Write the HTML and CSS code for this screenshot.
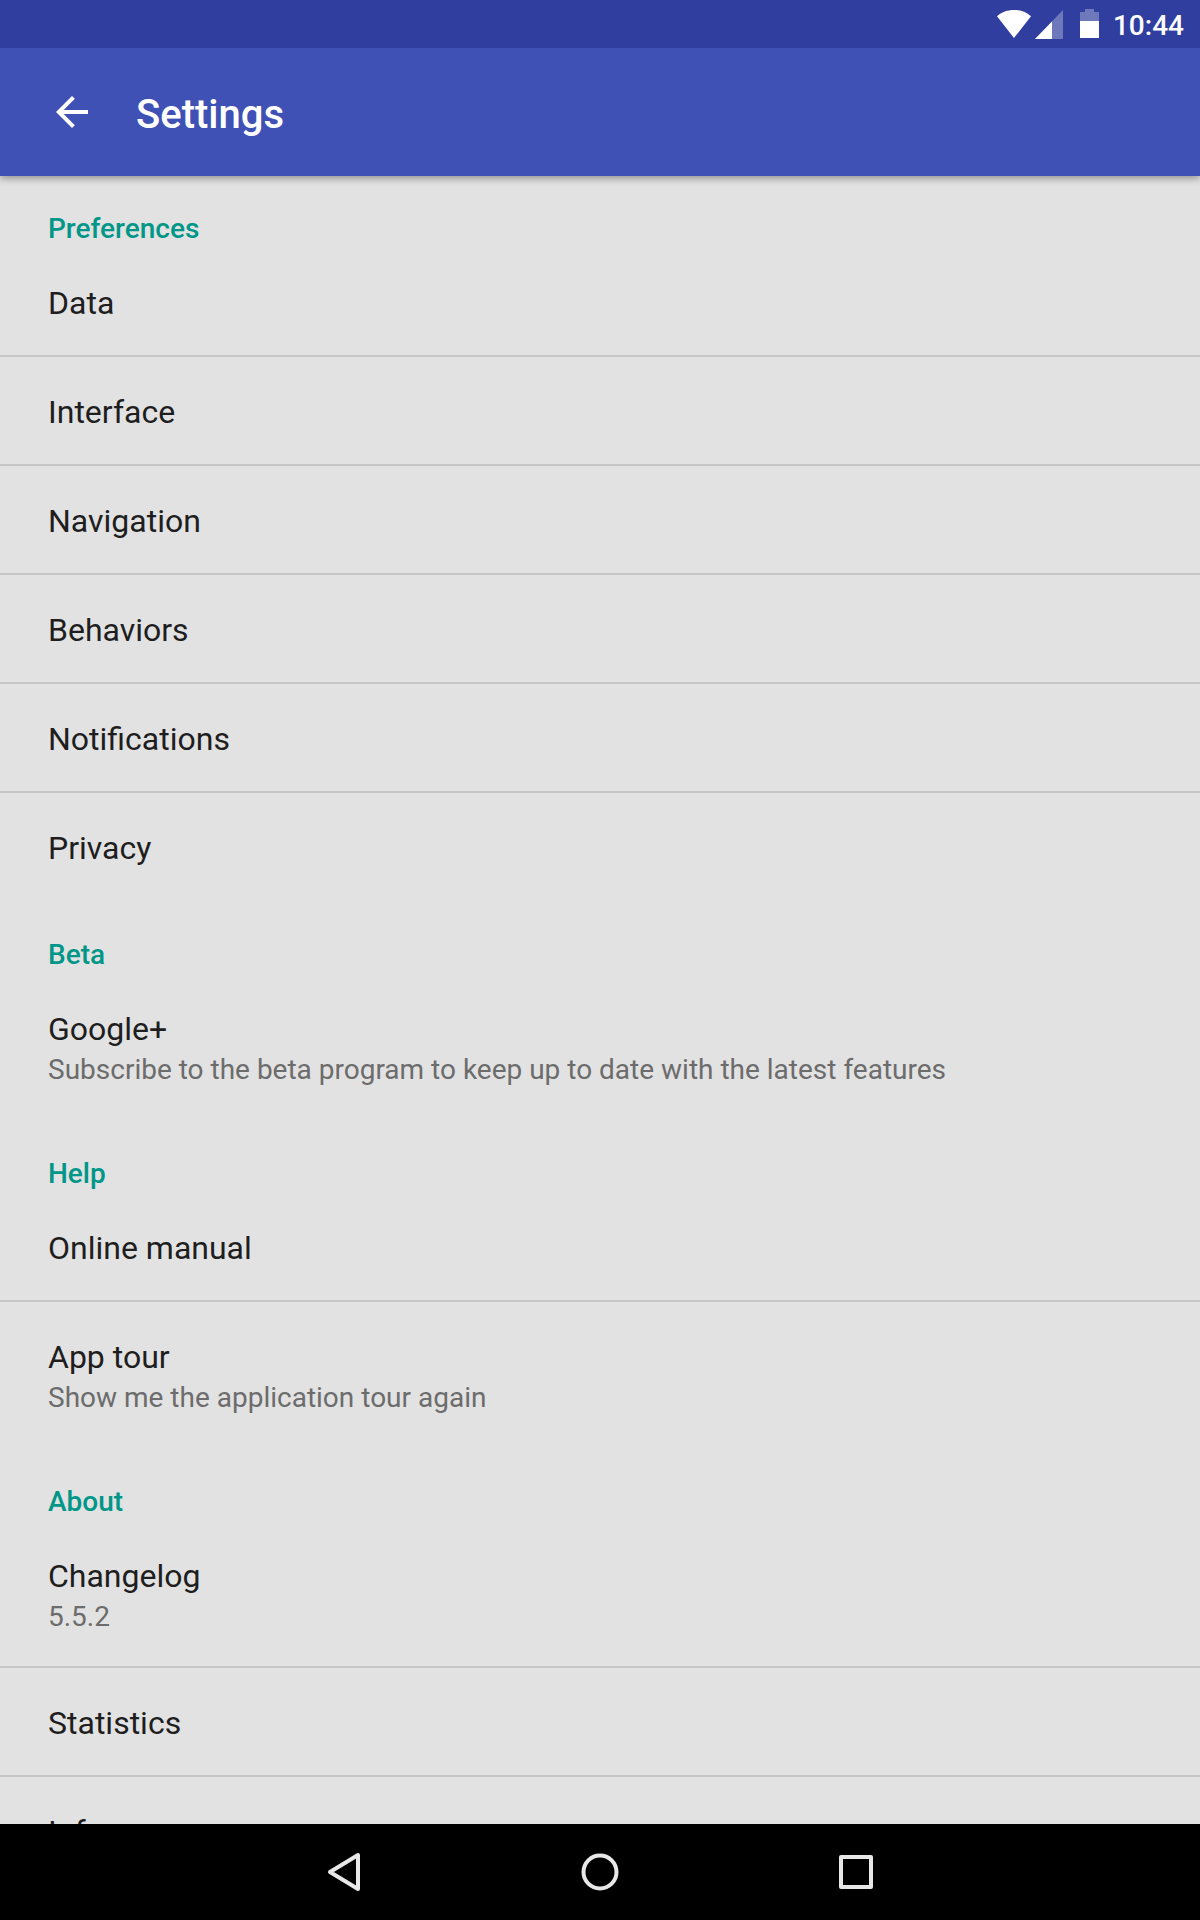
FILE: index.html
```html
<!DOCTYPE html>
<html lang="en">
<head>
<meta charset="utf-8">
<meta name="viewport" content="width=device-width, initial-scale=1">
<title>Settings</title>
<link rel="stylesheet" href="styles.css">
</head>
<body>
<div class="statusbar">
  <svg class="wifi" width="36" height="30" viewBox="0 0 36 30" aria-hidden="true"><path d="M1 7.2C5.500 3 11.500 1 18 1s12.500 2 17 6.200L18 29z" fill="#fff"/></svg>
  <svg class="signal" width="28" height="30" viewBox="0 0 28 30" aria-hidden="true"><path d="M28 1v29H0z" fill="#fff" fill-opacity=".3"/><path d="M17 12.400V30H0z" fill="#fff"/></svg>
  <svg class="battery" width="19" height="30" viewBox="0 0 19 30" aria-hidden="true"><path d="M5 0h9v3h5v9H0V3h5z" fill="#fff" fill-opacity=".3"/><path d="M0 12h19v17H0z" fill="#fff"/></svg>
  <time class="clock">10:44</time>
</div>
<header class="appbar">
  <button class="back" type="button" aria-label="Back"><svg width="48" height="48" viewBox="0 0 24 24" aria-hidden="true"><path d="M20 11H7.830l5.590-5.590L12 4l-8 8 8 8 1.410-1.410L7.830 13H20v-2z" fill="#fff"/></svg></button>
  <h1 class="title">Settings</h1>
</header>
<main class="content">
  <section class="group">
    <h2 class="category">Preferences</h2>
    <ul class="list">
      <li><a class="item" href="#data">Data</a></li>
      <li><a class="item" href="#interface">Interface</a></li>
      <li><a class="item" href="#navigation">Navigation</a></li>
      <li><a class="item" href="#behaviors">Behaviors</a></li>
      <li><a class="item" href="#notifications">Notifications</a></li>
      <li><a class="item" href="#privacy">Privacy</a></li>
    </ul>
  </section>
  <section class="group">
    <h2 class="category">Beta</h2>
    <ul class="list">
      <li><a class="item" href="#beta">Google+<span class="summary">Subscribe to the beta program to keep up to date with the latest features</span></a></li>
    </ul>
  </section>
  <section class="group">
    <h2 class="category">Help</h2>
    <ul class="list">
      <li><a class="item" href="#manual">Online manual</a></li>
      <li><a class="item" href="#tour">App tour<span class="summary">Show me the application tour again</span></a></li>
    </ul>
  </section>
  <section class="group">
    <h2 class="category">About</h2>
    <ul class="list">
      <li><a class="item" href="#changelog">Changelog<span class="summary">5.5.2</span></a></li>
      <li><a class="item" href="#statistics">Statistics</a></li>
      <li><a class="item" href="#info">Info</a></li>
    </ul>
  </section>
</main>
<nav class="navbar" aria-label="System">
  <button class="navkey" type="button" aria-label="Back"><svg width="48" height="48" viewBox="0 0 48 48" aria-hidden="true"><path d="M38 7v34L10 24z"/></svg></button>
  <button class="navkey" type="button" aria-label="Home"><svg width="48" height="48" viewBox="0 0 48 48" aria-hidden="true"><circle cx="24" cy="24" r="16.500"/></svg></button>
  <button class="navkey" type="button" aria-label="Recent apps"><svg width="48" height="48" viewBox="0 0 48 48" aria-hidden="true"><path d="M9 9h30v30H9z"/></svg></button>
</nav>
</body>
</html>
```
FILE: styles.css
```css
* { box-sizing: border-box; }

body {
  margin: 0;
  height: 100vh;
  display: flex;
  flex-direction: column;
  background: #e2e2e2;
  color: #1e1e1e;
  font-family: Roboto, "Noto Sans", sans-serif;
}

button {
  padding: 0;
  border: 0;
  background: none;
}

svg { display: block; }

.statusbar {
  flex: none;
  z-index: 2;
  display: flex;
  align-items: center;
  justify-content: flex-end;
  height: 48px;
  padding-right: 16px;
  background: #303f9f;
  color: #fff;
}

.signal { margin-left: 3px; }
.battery { margin: 0 14px 0 17px; }

.clock {
  padding-top: 4px;
  font-size: 28px;
  font-weight: 500;
  line-height: 32px;
}

.appbar {
  flex: none;
  z-index: 1;
  display: flex;
  align-items: center;
  gap: 40px;
  height: 128px;
  padding: 0 48px;
  background: #3f51b5;
  color: #fff;
  box-shadow: 0 2px 8px rgba(0, 0, 0, .4);
}

.title {
  margin: 0;
  padding-top: 6px;
  font-size: 40px;
  font-weight: 500;
  line-height: 48px;
}

.content {
  flex: 1;
  min-height: 0;
  overflow-y: auto;
  scrollbar-width: none;
}

.group + .group { padding-top: 2px; }

.category {
  margin: 0;
  padding: 34px 48px 0;
  color: #009688;
  font-size: 28px;
  font-weight: 500;
  line-height: 38px;
}

.list {
  margin: 0;
  padding: 0;
  list-style: none;
}

.list li + li { border-top: 2px solid #c6c6c6; }

.item {
  display: block;
  padding: 34px 48px 30px;
  color: inherit;
  font-size: 32px;
  line-height: 43px;
  text-decoration: none;
}

.summary {
  display: block;
  color: #6c6c6c;
  font-size: 28px;
  line-height: 38px;
}

.navbar {
  flex: none;
  display: flex;
  justify-content: center;
  height: 96px;
  background: #000;
}

.navkey {
  display: grid;
  place-items: center;
  width: 256px;
}

.navkey svg {
  fill: none;
  stroke: #e8e8e8;
  stroke-width: 4;
  stroke-linejoin: round;
}
```
